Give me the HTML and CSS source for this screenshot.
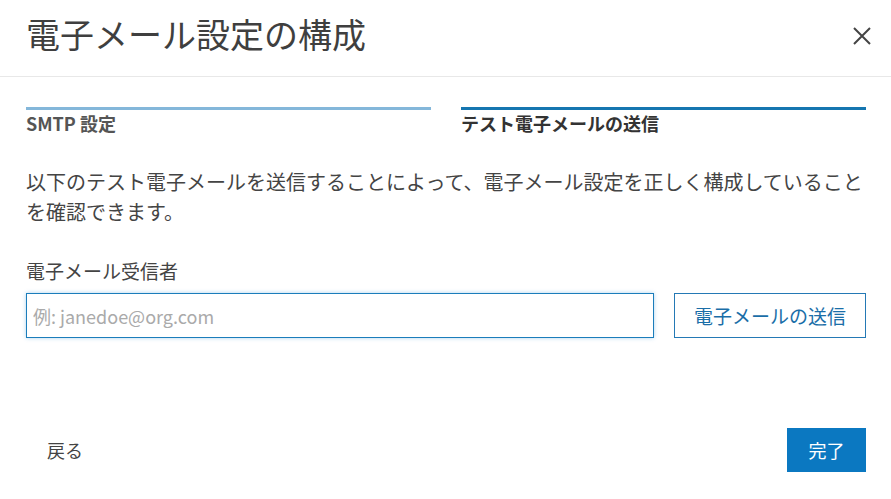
FILE: index.html
```html
<!DOCTYPE html>
<html lang="ja">
<head>
    <meta charset="UTF-8">
    <meta name="viewport" content="width=device-width, initial-scale=1.0">
    <title>電子メール設定の構成</title>
    <link rel="stylesheet" href="styles.css">
</head>
<body>

    <div class="dialog">
        <div class="dialog-header">
            <h1 class="dialog-title">電子メール設定の構成</h1>
            <button class="close-btn" aria-label="閉じる">
                <svg width="20" height="20" viewBox="0 0 20 20">
                    <path d="M2 2 L18 18 M18 2 L2 18" stroke="#444" stroke-width="2" fill="none"/>
                </svg>
            </button>
        </div>

        <div class="dialog-body">
            <div class="steps">
                <div class="step done">SMTP 設定</div>
                <div class="step active">テスト電子メールの送信</div>
            </div>

            <p class="intro">以下のテスト電子メールを送信することによって、電子メール設定を正しく構成していることを確認できます。</p>

            <label class="field-label" for="recipient">電子メール受信者</label>
            <div class="field-row">
                <input id="recipient" class="text-input" type="text" placeholder="例: janedoe@org.com">
                <button class="btn-outline">電子メールの送信</button>
            </div>
        </div>

        <div class="dialog-footer">
            <button class="btn-plain">戻る</button>
            <button class="btn-primary">完了</button>
        </div>
    </div>

</body>
</html>
```

FILE: styles.css
```css
* {
    box-sizing: border-box;
}
body {
    margin: 0;
    background: #fff;
    font-family: "Noto Sans CJK JP", "Noto Sans", sans-serif;
    color: #444;
}
.dialog {
    width: 891px;
    height: 499px;
    display: flex;
    flex-direction: column;
}

/* header */
.dialog-header {
    height: 77px;
    border-bottom: 1px solid #e8e8e8;
    display: flex;
    justify-content: space-between;
    align-items: flex-start;
    padding: 14px 19px 0 26px;
}
.dialog-title {
    margin: 0;
    font-size: 34px;
    font-weight: 400;
    line-height: 40px;
    color: #3f3f3f;
}
.close-btn {
    border: none;
    background: none;
    padding: 0;
    margin-top: 12px;
    width: 20px;
    height: 20px;
}

/* body */
.dialog-body {
    padding: 0 25px 0 26px;
}
.steps {
    display: grid;
    grid-template-columns: 1fr 1fr;
    column-gap: 30px;
    margin-top: 30px;
}
.step {
    border-top: 3px solid #84b7da;
    padding-top: 1px;
    font-size: 18px;
    font-weight: 700;
    line-height: 24px;
    color: #555;
}
.step.active {
    border-top-color: #1576b0;
    color: #333;
}
.intro {
    margin: 32px 0 0;
    font-size: 20px;
    line-height: 30px;
    color: #444;
}
.field-label {
    display: block;
    margin-top: 32px;
    font-size: 19px;
    line-height: 24px;
    color: #444;
}
.field-row {
    display: flex;
    gap: 20px;
    margin-top: 10px;
}
.text-input {
    flex: 1;
    height: 45px;
    border: 1px solid #1b7dbb;
    box-shadow: 0 0 4px rgba(20, 130, 210, 0.35);
    padding: 0 6px;
    font-family: inherit;
    font-size: 18px;
    color: #333;
    outline: none;
}
.text-input::placeholder {
    color: #aaa;
}
.btn-outline {
    width: 192px;
    height: 45px;
    border: 1px solid #2479b5;
    background: #fff;
    color: #1a6ea8;
    font-family: inherit;
    font-size: 19px;
}

/* footer */
.dialog-footer {
    margin-top: auto;
    padding: 0 25px 27px 26px;
    display: flex;
    justify-content: space-between;
    align-items: center;
}
.btn-plain {
    height: 44px;
    border: none;
    background: none;
    padding: 0 21px;
    font-family: inherit;
    font-size: 18px;
    color: #444;
}
.btn-primary {
    width: 79px;
    height: 44px;
    border: none;
    background: #0b78c1;
    color: #fff;
    font-family: inherit;
    font-size: 18px;
}
```
